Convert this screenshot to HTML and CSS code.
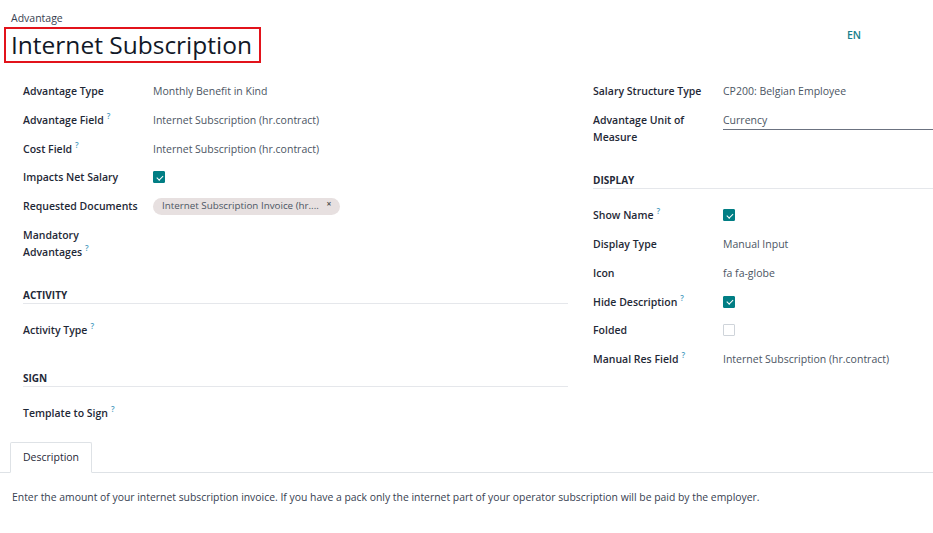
FILE: index.html
```html
<!DOCTYPE html>
<html>
<head>
<meta charset="utf-8">
<link rel="stylesheet" href="styles.css">
</head>
<body>
<div class="sheet">
  <div class="header">
    <div class="titles">
      <div class="breadcrumb">Advantage</div>
      <h1 class="title">Internet Subscription</h1>
    </div>
    <div class="lang">EN</div>
  </div>

  <div class="form">
    <div class="group">
      <div class="row"><div class="label">Advantage Type</div><div class="value">Monthly Benefit in Kind</div></div>
      <div class="row"><div class="label">Advantage Field<sup class="help">?</sup></div><div class="value">Internet Subscription (hr.contract)</div></div>
      <div class="row"><div class="label">Cost Field<sup class="help">?</sup></div><div class="value">Internet Subscription (hr.contract)</div></div>
      <div class="row"><div class="label">Impacts Net Salary</div><div class="value"><span class="check on"></span></div></div>
      <div class="row"><div class="label">Requested Documents</div><div class="value"><span class="tag">Internet Subscription Invoice (hr.... <span class="x">×</span></span></div></div>
      <div class="row"><div class="label">Mandatory<br>Advantages<sup class="help">?</sup></div><div class="value"></div></div>

      <div class="section">ACTIVITY</div>
      <div class="row"><div class="label">Activity Type<sup class="help">?</sup></div><div class="value"></div></div>

      <div class="section">SIGN</div>
      <div class="row"><div class="label">Template to Sign<sup class="help">?</sup></div><div class="value"></div></div>
    </div>

    <div class="group right">
      <div class="row"><div class="label">Salary Structure Type</div><div class="value">CP200: Belgian Employee</div></div>
      <div class="row"><div class="label">Advantage Unit of<br>Measure</div><div class="value"><div class="input">Currency</div></div></div>

      <div class="section">DISPLAY</div>
      <div class="row"><div class="label">Show Name<sup class="help">?</sup></div><div class="value"><span class="check on"></span></div></div>
      <div class="row"><div class="label">Display Type</div><div class="value">Manual Input</div></div>
      <div class="row"><div class="label">Icon</div><div class="value">fa fa-globe</div></div>
      <div class="row"><div class="label">Hide Description<sup class="help">?</sup></div><div class="value"><span class="check on"></span></div></div>
      <div class="row"><div class="label">Folded</div><div class="value"><span class="check"></span></div></div>
      <div class="row"><div class="label">Manual Res Field<sup class="help">?</sup></div><div class="value">Internet Subscription (hr.contract)</div></div>
    </div>
  </div>

  <div class="tabs">
    <div class="tab">Description</div>
  </div>
  <p class="desc">Enter the amount of your internet subscription invoice. If you have a pack only the internet part of your operator subscription will be paid by the employer.</p>
</div>
</body>
</html>
```

FILE: styles.css
```css
html, body {
  margin: 0;
  padding: 0;
  background: #fff;
}
body {
  font-family: "Open Sans", "Noto Sans", sans-serif;
  font-size: 10.5px;
  color: #374151;
}
.sheet {
  width: 933px;
}
.header {
  display: flex;
  justify-content: space-between;
  align-items: flex-start;
  padding: 11px 0 0 4px;
}
.breadcrumb {
  padding-left: 7px;
  line-height: 14px;
  color: #374151;
  margin-bottom: 2px;
}
.title {
  margin: 0;
  display: inline-block;
  border: 2px solid #e2131b;
  padding: 0 7px 0 5px;
  font-size: 24.5px;
  font-weight: 400;
  line-height: 32px;
  color: #111827;
}
.lang {
  margin: 18px 72px 0 0;
  color: #17818c;
  font-weight: 600;
  line-height: 12px;
}
.form {
  display: grid;
  grid-template-columns: 545px 340px;
  column-gap: 25px;
  padding: 14px 0 0 23px;
}
.row {
  display: grid;
  grid-template-columns: 130px 1fr;
  padding: 6px 0;
  line-height: 16.75px;
}
.label {
  font-weight: 600;
  color: #1f2937;
}
.value {
  color: #4b5563;
}
.help {
  color: #4a9bc0;
  font-size: 8px;
  font-weight: 600;
  margin-left: 3px;
  vertical-align: 5px;
  line-height: 0;
}
.section {
  margin-top: 21px;
  margin-bottom: 12px;
  font-weight: 700;
  color: #1f2937;
  line-height: 16px;
  border-bottom: 1px solid #e5e7eb;
  font-size: 10px;
}
.group .section + .row + .section {
  margin-top: 25px;
}
.check {
  display: inline-block;
  width: 12px;
  height: 12px;
  box-sizing: border-box;
  border: 1px solid #cfd4da;
  border-radius: 1px;
  vertical-align: -2px;
  background: #fff;
  position: relative;
}
.check.on {
  background: #017e84;
  border-color: #017e84;
}
.check.on::after {
  content: "";
  position: absolute;
  left: 3.5px;
  top: 1.5px;
  width: 2.5px;
  height: 5px;
  border: solid #fff;
  border-width: 0 1.6px 1.6px 0;
  transform: rotate(45deg);
}
.tag {
  display: inline-block;
  vertical-align: top;
  background: #e7e0e0;
  color: #4b5563;
  border-radius: 9px;
  padding: 0 9px;
  line-height: 16.75px;
  font-size: 9.8px;
}
.tag .x {
  margin-left: 5px;
  font-size: 8.5px;
  font-weight: 700;
  vertical-align: 2px;
  line-height: 0;
  color: #555;
}
.input {
  border-bottom: 1px solid #6b7280;
  padding-bottom: 0px;
}
.tabs {
  display: flex;
  margin-top: 14px;
  padding-left: 10px;
  border-bottom: 1px solid #dee2e6;
}
.tab {
  border: 1px solid #dee2e6;
  border-bottom: 1px solid #fff;
  margin-bottom: -1px;
  padding: 7px 12px;
  line-height: 15px;
  color: #1f2937;
  border-radius: 2px 2px 0 0;
}
.desc {
  margin: 17px 0 0 12px;
  line-height: 14px;
  color: #374151;
  font-size: 10.4px;
}
```
